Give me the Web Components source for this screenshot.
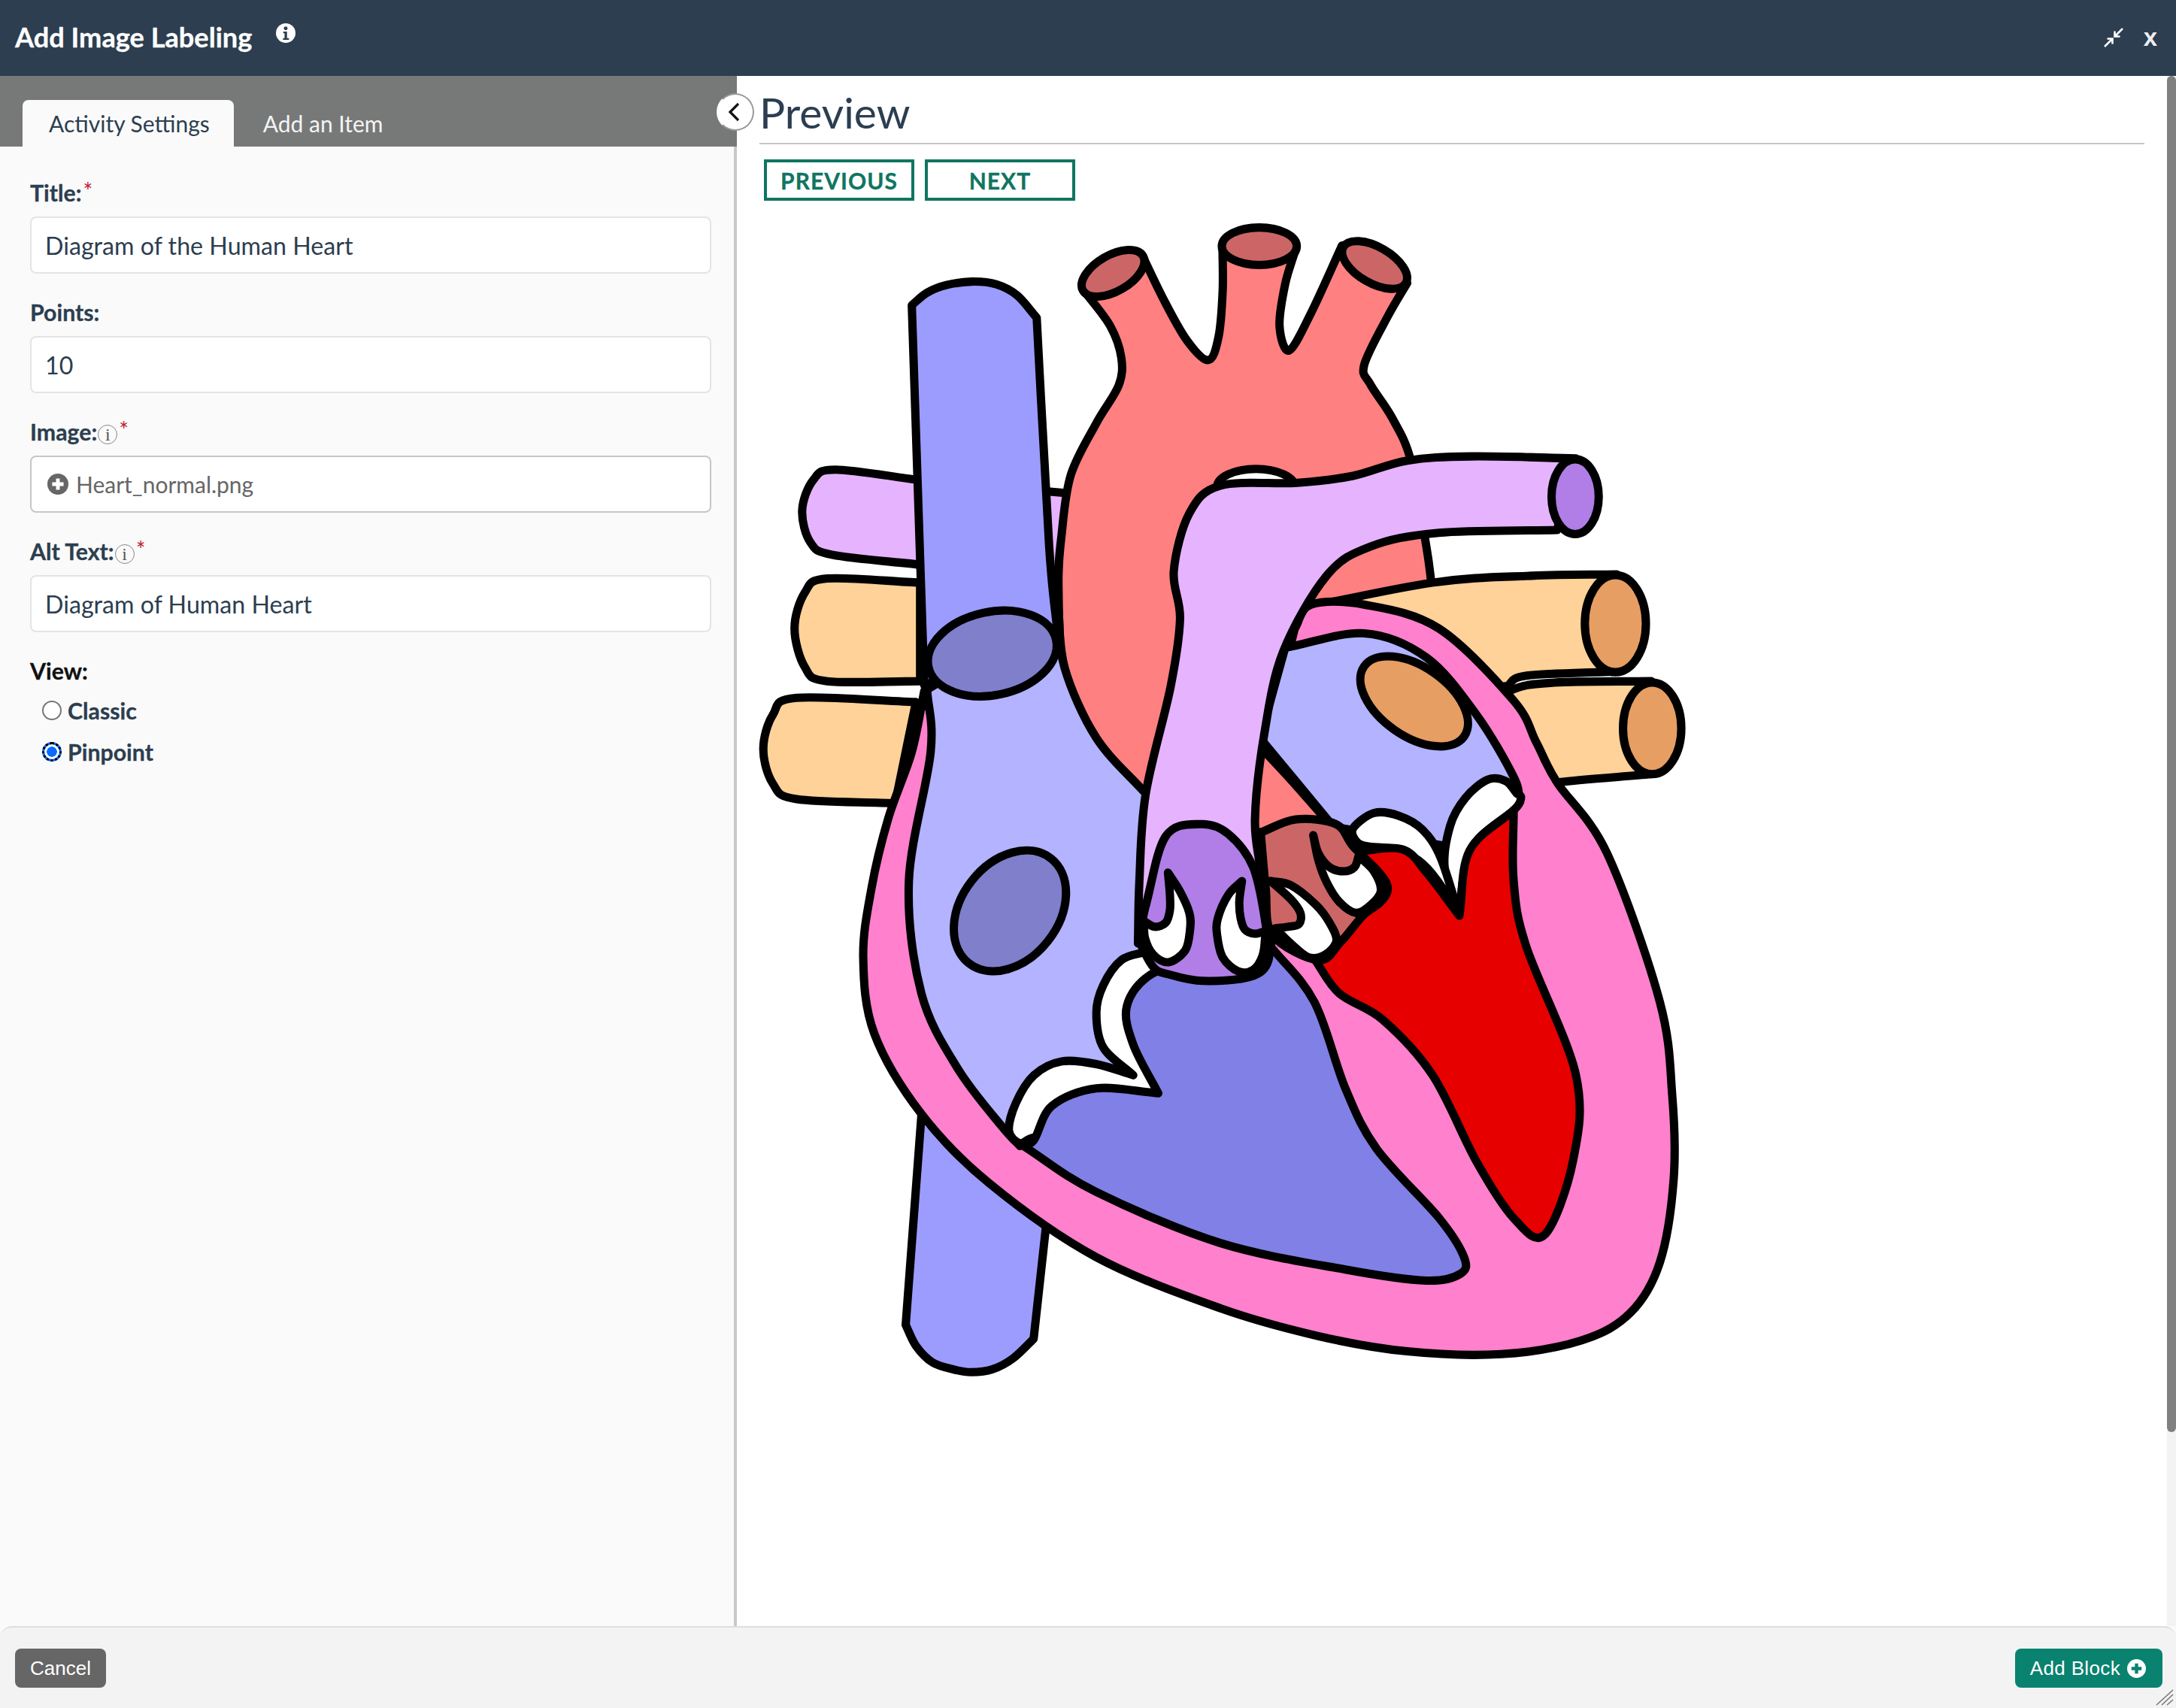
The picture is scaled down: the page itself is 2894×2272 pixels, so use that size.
<!DOCTYPE html>
<html lang="en">
<head>
<meta charset="utf-8">
<title>Add Image Labeling</title>
<style>
  html, body { margin: 0; height: 100%; background: #fafafa; }
  body { font-family: Lato, "Liberation Sans", sans-serif; color: #2c3e50; overflow: hidden; }
</style>
</head>
<body>
<activity-modal>
  <modal-header slot="header">Add Image Labeling</modal-header>
  <settings-panel slot="left">
    <form-field label="Title:" required>Diagram of the Human Heart</form-field>
    <form-field label="Points:">10</form-field>
    <form-field label="Image:" info required file>Heart_normal.png</form-field>
    <form-field label="Alt Text:" info required>Diagram of Human Heart</form-field>
    <view-picker></view-picker>
  </settings-panel>
  <preview-panel slot="right">
    <heart-diagram></heart-diagram>
  </preview-panel>
  <modal-footer slot="footer"></modal-footer>
</activity-modal>

<script>
  const PLUS_CIRCLE = `<circle cx="12" cy="12" r="12" fill="currentColor"/><path d="M12 5.5v13M5.5 12h13" stroke="var(--plus, #fff)" stroke-width="4.2"/>`;

  class ActivityModal extends HTMLElement {
    connectedCallback() {
      this.attachShadow({ mode: 'open' }).innerHTML = `
      <style>
        :host { display: grid; grid-template-rows: 101px 1fr 109px; height: 2272px; width: 2894px; position: relative; }
        main { display: flex; min-height: 0; }
        .grip { position: absolute; right: 3px; bottom: 3px; width: 24px; height: 22px; }
      </style>
      <slot name="header"></slot>
      <main><slot name="left"></slot><slot name="right"></slot></main>
      <slot name="footer"></slot>
      <svg class="grip" viewBox="0 0 24 22"><path d="M1 21 23 1M8 21 23 7M15 21 23 14" stroke="#777" stroke-width="1.6" fill="none"/></svg>
      `;
    }
  }

  class ModalHeader extends HTMLElement {
    connectedCallback() {
      this.attachShadow({ mode: 'open' }).innerHTML = `
      <style>
        :host { display: flex; align-items: center; background: #2c3e50; color: #fff; padding: 0 25px 0 20px; }
        h1 { margin: 0 0 4px; font: 700 36.2px Lato, sans-serif; -webkit-text-stroke: .3px #fff; }
        .info { width: 26px; height: 26px; margin: -14px 0 0 32px; }
        .end { margin-left: auto; display: flex; align-items: center; gap: 26px; }
        .end svg { width: 28px; height: 28px; margin-top: -2px; }
        .close { font: 700 33px/1 "Liberation Sans", sans-serif; color: #eee; margin-top: -2px; }
      </style>
      <h1><slot></slot></h1>
      <svg class="info" viewBox="0 0 24 24"><circle cx="12" cy="12" r="12" fill="#fff"/><circle cx="12" cy="6.2" r="2.3" fill="#2c3e50"/><path d="M9 10.2h4.6v8H16v2H8.6v-2H10.6v-6H9z" fill="#2c3e50"/></svg>
      <div class="end">
        <svg viewBox="0 0 28 28" fill="none" stroke="#fff" stroke-width="2.6"><path d="M26 2 16.5 11.5M15.5 5.5v7h7M2 26l9.5-9.5M12.5 22.5v-7h-7"/></svg>
        <span class="close">x</span>
      </div>
      `;
    }
  }

  class SettingsPanel extends HTMLElement {
    connectedCallback() {
      this.attachShadow({ mode: 'open' }).innerHTML = `
      <style>
        :host { display: flex; flex-direction: column; width: 980px; height: 100%; box-sizing: border-box; background: #fafafa; border-right: 4px solid #c8c8c8; position: relative; }
        .tabs { display: flex; align-items: flex-end; height: 94px; margin-right: -4px; padding-left: 30px; background: #777978; font-size: 30px; }
        .tab { height: 62px; box-sizing: border-box; padding: 13px 32px 0 39px; color: #f4f4f4; }
        .tab.on { background: #fafafa; color: #2c3e50; border-radius: 8px 8px 0 0; padding-left: 35px; }
        .body { padding: 41px 30px 0 40px; }
        .toggle { position: absolute; right: -27px; top: 23px; width: 46px; height: 46px; border-radius: 50%; background: #fff; border: 2px solid #9a9a9a; border-left-color: transparent; display: flex; align-items: center; justify-content: center; }
        .toggle svg { width: 18px; height: 26px; margin-right: 4px; }
      </style>
      <div class="tabs"><div class="tab on">Activity Settings</div><div class="tab">Add an Item</div></div>
      <div class="toggle"><svg viewBox="0 0 18 26" fill="none" stroke="#111" stroke-width="3.2"><path d="M15 2 4 13l11 11"/></svg></div>
      <div class="body"><slot></slot></div>
      `;
    }
  }

  class FormField extends HTMLElement {
    connectedCallback() {
      const label = this.getAttribute('label');
      const info = this.hasAttribute('info') ? '<span class="i">i</span>' : '';
      const star = this.hasAttribute('required') ? '<sup>*</sup>' : '';
      const file = this.hasAttribute('file');
      this.attachShadow({ mode: 'open' }).innerHTML = `
      <style>
        :host { display: block; margin-bottom: 31px; }
        label { display: flex; align-items: center; height: 40px; margin-bottom: 12px; font-weight: 700; font-size: 30.3px; color: #2c3e50; -webkit-text-stroke: .3px #2c3e50; }
        .i { width: 24px; height: 24px; margin: 8px 0 0 1px; border: 1px solid #888; border-radius: 50%; font: 24px/24px "Liberation Serif", serif; text-align: center; color: #555; -webkit-text-stroke: 0; }
        sup { color: #bf1b32; font-size: 30px; line-height: 1; margin: -6px 0 0 2px; font-weight: 400; -webkit-text-stroke: 0; }
        .box { display: flex; align-items: center; gap: 10px; height: 76px; box-sizing: border-box; padding: 0 18px; background: #fff; border: 2px solid #e4e4e4; border-radius: 8px; font-size: 32.2px; color: #2c3e50; }
        .box.file { border-color: #c6c6c6; color: #666; font-size: 30px; padding-left: 21px; }
        .box svg { width: 28px; height: 28px; color: #666; }
      </style>
      <label>${label}${info}${star}</label>
      <div class="box ${file ? 'file' : ''}">
        ${file ? `<svg viewBox="0 0 24 24">${PLUS_CIRCLE}</svg>` : ''}
        <span><slot></slot></span>
      </div>
      `;
    }
  }

  class ViewPicker extends HTMLElement {
    connectedCallback() {
      this.attachShadow({ mode: 'open' }).innerHTML = `
      <style>
        :host { display: block; font-weight: 700; font-size: 30.3px; -webkit-text-stroke: .3px currentColor; }
        .title { height: 40px; line-height: 40px; color: #111; margin-bottom: 5px; }
        .row { display: flex; align-items: center; height: 55px; padding-left: 16px; gap: 8px; color: #2c3e50; }
        .dot { width: 26px; height: 26px; box-sizing: border-box; border-radius: 50%; background: #fff; border: 2.5px solid #777; }
        .dot.on { border: 3px dotted #000; background: radial-gradient(circle, #0a6cff 0 6.5px, #fff 7px 9.5px, #0a6cff 10px) border-box; }
      </style>
      <div class="title">View:</div>
      <div class="row"><span class="dot"></span>Classic</div>
      <div class="row"><span class="dot on"></span>Pinpoint</div>
      `;
    }
  }

  class PreviewPanel extends HTMLElement {
    connectedCallback() {
      this.attachShadow({ mode: 'open' }).innerHTML = `
      <style>
        :host { display: flex; flex: 1; height: 100%; background: #fff; }
        .content { flex: 1; min-width: 0; padding-left: 30px; }
        h2 { margin: 0 30px 0 0; height: 91px; box-sizing: border-box; padding-top: 19px; border-bottom: 2px solid #c6c6c6; font: 400 57px/58px Lato, sans-serif; color: #2c3e50; }
        .buttons { display: flex; gap: 14px; margin: 20px 0 19px 6px; }
        .btn { width: 200px; height: 55px; box-sizing: border-box; border: 4px solid #0f7561; color: #0f7561; font: 700 30px/48px Lato, sans-serif; letter-spacing: 1px; text-align: center; -webkit-text-stroke: .3px #0f7561; }
        .bar { width: 12px; background: #f3f3f3; }
        .bar div { height: 1804px; background: #808080; border-radius: 6px; }
      </style>
      <div class="content">
        <h2>Preview</h2>
        <div class="buttons"><div class="btn">PREVIOUS</div><div class="btn">NEXT</div></div>
        <slot></slot>
      </div>
      <div class="bar"><div></div></div>
      `;
    }
  }

  // point list -> smooth path, a trailing c marks a hard corner
  function smooth(list) {
    const p = list.trim().split(/\s+/).map(s => {
      const [x, y] = s.replace('c', '').split(',').map(Number);
      return { x, y, c: s.endsWith('c') };
    });
    const n = p.length;
    const f = v => v.toFixed(1);
    let d = `M${f(p[0].x)} ${f(p[0].y)}`;
    for (let i = 0; i < n; i++) {
      const a = p[(i - 1 + n) % n], b = p[i], c = p[(i + 1) % n], e = p[(i + 2) % n];
      const c1 = b.c ? { x: b.x + (c.x - b.x) / 3, y: b.y + (c.y - b.y) / 3 } : { x: b.x + (c.x - a.x) / 6, y: b.y + (c.y - a.y) / 6 };
      const c2 = c.c ? { x: c.x - (c.x - b.x) / 3, y: c.y - (c.y - b.y) / 3 } : { x: c.x - (e.x - b.x) / 6, y: c.y - (e.y - b.y) / 6 };
      d += `C${f(c1.x)} ${f(c1.y)} ${f(c2.x)} ${f(c2.y)} ${f(c.x)} ${f(c.y)}`;
    }
    return d + 'Z';
  }

  const shape = (fill, list) => `<path fill="${fill}" d="${smooth(list)}"/>`;
  const oval = (fill, cx, cy, rx, ry, rot = 0) => `<ellipse fill="${fill}" cx="${cx}" cy="${cy}" rx="${rx}" ry="${ry}" transform="rotate(${rot} ${cx} ${cy})"/>`;

  const LILAC = '#e6b3ff', VEIN = '#9c9cff', ATRIUM = '#b3b3ff', VENTRICLE = '#8080e6', OPENING = '#7f7fcc';
  const SALMON = '#ff8080', CAP = '#cc6666', PINK = '#ff80cc', RED = '#e60000', ORANGE = '#ffd29a', TAN = '#e69e63', PURPLE = '#b07ee6';

  class HeartDiagram extends HTMLElement {
    connectedCallback() {
      const parts = [
        // vessels behind everything
        shape(LILAC, '775,356c 662,346c 602,338.5 586,346 578,368 584,391 600,400 663,407c 780,420c'),
        shape(ORANGE, '663,420c 596,417 580,427 572.5,453 580,481 596,491 663,491c'),
        shape(ORANGE, '660,506c 574,503 557,515 550,540 557,565 574,576 645,579c'),
        shape(VEIN, '664,803c 652.6,955c 660,970 672,982 687,987 700,989 715,987 730,979 744.8,965c 753.7,884c'),
        // aorta
        shape(SALMON, '825.6,572c 790,532 767,481 762.7,422 765,385 771.7,342 790,305 806,278 808,258 800,235 780.7,209c 823,184c 838,215 855,245 870.5,259.6 878,243 881,210 880.9,177c 933.5,180c 926,205 922,235 929,252.6 945,225 967,177c 1014,204c 1000,228 983,263 987.4,277 1003,301 1016.6,332 1027.8,394 1032,425c 940,440c 905,535c 962,596c 905,600c'),
        oval(CAP, 802, 197, 25, 13, -30),
        oval(CAP, 907.4, 177.5, 27, 13.5),
        oval(CAP, 990.5, 191, 26, 13, 30),
        // pulmonary veins on the right
        shape(ORANGE, '1060,520c 1088,498 1120,492 1190,491c 1190,558c 1122,564 1100,570c'),
        oval(TAN, 1190.5, 525, 21, 33),
        shape(ORANGE, '930,440c 1032,420 1104,415 1165,414c 1165,484c 1100,487 1086,494.5c 1040,500c'),
        oval(TAN, 1164, 449.5, 22, 35),
        // muscle wall
        shape(PINK, '666,498c 657,542 640,590 628,640 622,690 630,745 664,803 713,853 789.7,906 879.5,943 950,963 1014,974 1081.7,976 1140,966 1175,946 1196,910 1206,850 1205,790 1196,722 1158,615 1122,564 1107,535 1090.7,505 1036.8,453 983,435.8 944.7,435.8 933,453c 911,540c 960,596c 915,682c 830,700c 825,650c 700,700c 672,520c'),
        // atria
        shape(ATRIUM, '668,497c 670.6,542 654.9,635 663.9,716 690,770 722,812 735,826c 820,780c 825,700c 825.6,572c 790,532 767,481 762.7,440c'),
        shape(ATRIUM, '926,467c 983,456.5 1028,474 1063.8,515 1090.7,560 1095,578c 1043,610c 961,596c 908,532c'),
        oval(TAN, 1019, 505.5, 44, 25, 35),
        oval(OPENING, 727.7, 656.5, 48, 35, -52),
        // superior vena cava
        shape(VEIN, '657,220c 668,211 682,205.5 700,203 718,205 733,213 747,229c 756,394 762,456c 666,494c'),
        oval(OPENING, 715, 471, 47, 30, -12),
        // pulmonary trunk
        oval('#fff', 905, 351, 28, 13),
        shape(LILAC, '1135.6,330.4c 1060,329 1014,332 975,343 935,348 879.5,350 857,370 845.8,411.6 850.3,446 843.6,494.5 825.6,572 821,635 820,680c 910,680c 908.7,632 904.3,591 911,529 924.5,470 955.9,415 987.4,394 1036.8,384 1122,382c'),
        oval(PURPLE, 1135, 358, 17, 27),
        // right ventricle
        shape('#fff', '825.6,686c 808,692 795,710 790,730 795,755 816.6,775c 790,767 765,765 745,775 732,795 727,815 735,824 745,820 770,820c 850,800c 850,720c'),
        shape(VENTRICLE, '830,702 812,725 816.6,753 834.6,788c 790,784.4 758,797 745,821.7 736,825c 789.7,859 879.5,896 969.4,915 1027.8,923 1052.5,918 1054.8,905.7 1036.8,877.7 992,828 969.4,784.4 947,722 915.5,682c 870,690c'),
        // pulmonary valve
        shape(PURPLE, '825,655c 839.8,603 865,594 885,601 903,625 912,666 914,692 901,704 867,707 843,702.5 831,697 820,677c'),
        shape('#fff', '841.6,629c 850,642 857,658 857.5,670 854,685 842,693.5 831,688 825,676 824.4,664c 832,668 840,665 843,656 843,645'),
        shape('#fff', '894.9,635c 885,645 877.5,662 877,674 881,690 892,700 903,699 910,688 912,671c 904,673 897,670 894,662 893,650'),
        // left ventricle
        shape('#fff', '1093,572c 1085,563 1072,562 1056,575 1045,595 1041,626 1051.6,660c 1055,630 1065,605 1090.7,584 1096,575'),
        shape('#fff', '975,597 990,586 1008,588 1025,598 1038,618 1051.6,660c 1036,635 1022,620 1005,612 985,610 977,606'),
        shape(RED, '975,614c 1010,612 1028,629 1051.6,660c 1059,613 1090.7,584c 1090.7,635 1099.7,682 1135.6,775 1133.4,837 1113,890 1090.7,878 1063.8,837 1032.3,775 996.4,735 965,716 947,691c 975,650c'),
        // aortic valve
        shape(CAP, '908.4,600c 933.7,590.6 962.6,594 975,610 993,628 1000,640 995,650 982,660 966,679 950,692 917,674 912,640'),
        shape('#fff', '946.3,602c 950,615 958,625 968,628 976,625 979,617c 990,628 995,642 988,652 977,658 965,650 956,636 950,620'),
        shape('#fff', '915.6,635c 930,638 948,652 958,665 963,678 955,688 943,690 930,680 919,669c 928,668 936,666 937,658 930,648')
      ].join('');
      this.attachShadow({ mode: 'open' }).innerHTML = `
      <style>
        :host { display: block; }
        svg { display: block; width: 1273.5px; height: 1559.6px; overflow: visible; }
        g { stroke: #000; stroke-width: 6; stroke-linejoin: round; }
      </style>
      <svg viewBox="547.2 155 690 845" role="img" aria-label="Diagram of the human heart"><g>${parts}</g></svg>
      `;
    }
  }

  class ModalFooter extends HTMLElement {
    connectedCallback() {
      this.attachShadow({ mode: 'open' }).innerHTML = `
      <style>
        :host { display: flex; justify-content: space-between; align-items: flex-start; box-sizing: border-box; padding: 28px 18px 0 20px; background: #f3f3f3; border-top: 2px solid #dedede; border-radius: 16px 16px 0 0; font: 26px "Liberation Sans", sans-serif; color: #fff; }
        .btn { display: flex; align-items: center; gap: 9px; height: 52px; box-sizing: border-box; padding: 0 20px; border-radius: 8px; }
        .cancel { background: #666; }
        .add { background: #0a8270; --plus: #0a8270; letter-spacing: .35px; padding: 0 22px 0 20px; }
        svg { width: 25px; height: 25px; color: #fff; }
      </style>
      <div class="btn cancel">Cancel</div>
      <div class="btn add">Add Block <svg viewBox="0 0 24 24">${PLUS_CIRCLE}</svg></div>
      `;
    }
  }

  customElements.define('activity-modal', ActivityModal);
  customElements.define('modal-header', ModalHeader);
  customElements.define('settings-panel', SettingsPanel);
  customElements.define('form-field', FormField);
  customElements.define('view-picker', ViewPicker);
  customElements.define('preview-panel', PreviewPanel);
  customElements.define('heart-diagram', HeartDiagram);
  customElements.define('modal-footer', ModalFooter);
</script>
</body>
</html>
